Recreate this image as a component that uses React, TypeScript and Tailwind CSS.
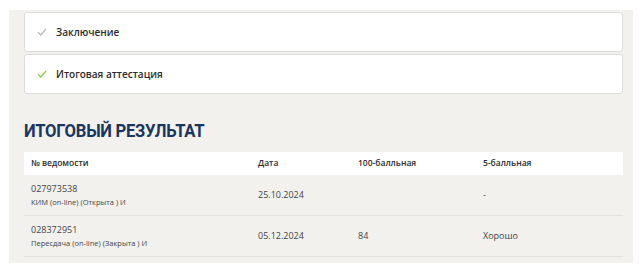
import React from 'react';

// Section item with a check mark
function StepCard({ title, done }: { title: string; done: boolean }) {
    return (
        <div className="flex items-center h-[40px] bg-white border border-[#dcdcdc] rounded-[3px] pl-[12px]">
            <svg width="10" height="8" viewBox="0 0 10 8" className="mr-[9px]">
                <path
                    d="M1 4.2 L3.8 7 L9 1"
                    fill="none"
                    stroke={done ? '#8cc63f' : '#b8b8b8'}
                    strokeWidth="1.2"
                />
            </svg>
            <span className="text-[10px] font-semibold text-[#2b2b2b]">{title}</span>
        </div>
    );
}

const rows = [
    { num: '027973538', sub: 'КИМ (on-line) (Открыта ) И', date: '25.10.2024', score: '', grade: '-' },
    { num: '028372951', sub: 'Пересдача (on-line) (Закрыта ) И', date: '05.12.2024', score: '84', grade: 'Хорошо' },
];

export default function App() {
    return (
        <div className="w-[639px] h-[272px] bg-white pt-[10px] pl-[9px] font-['Open_Sans',sans-serif]">
            <div className="w-[624px] h-[253px] bg-[#f2f1ee] pt-[2px] pl-[15px] pr-[10px]">
                {/* Steps */}
                <div className="flex flex-col gap-[2px]">
                    <StepCard title="Заключение" done={false} />
                    <StepCard title="Итоговая аттестация" done={true} />
                </div>

                {/* Result heading */}
                <h2 className="mt-[25px] h-[33px] text-[19px] leading-[24px] font-bold text-[#1c355e] tracking-[-0.3px] font-['Roboto',sans-serif] origin-left scale-x-[0.875]">
                    ИТОГОВЫЙ РЕЗУЛЬТАТ
                </h2>

                {/* Result table */}
                <div className="text-[#333]">
                    <div className="flex items-center h-[23px] bg-white text-[8.5px] font-semibold text-[#2b2b2b]">
                        <div className="w-[234px] pl-[7px]">№ ведомости</div>
                        <div className="w-[100px]">Дата</div>
                        <div className="w-[125px]">100-балльная</div>
                        <div>5-балльная</div>
                    </div>
                    {rows.map(row => (
                        <div key={row.num} className="flex items-center h-[41px] border-b border-[#e3e2de] text-[9px] text-[#444]">
                            <div className="w-[234px] pl-[7px] flex flex-col">
                                <span className="leading-[14px]">{row.num}</span>
                                <span className="text-[7.5px] leading-[12px]">{row.sub}</span>
                            </div>
                            <div className="w-[100px]">{row.date}</div>
                            <div className="w-[125px]">{row.score}</div>
                            <div>{row.grade}</div>
                        </div>
                    ))}
                </div>
            </div>
        </div>
    );
}
